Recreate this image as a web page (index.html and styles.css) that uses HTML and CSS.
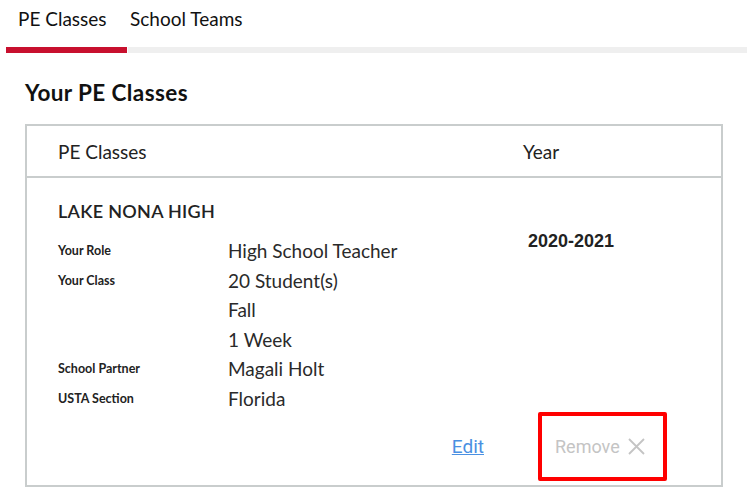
FILE: index.html
```html
<!DOCTYPE html>
<html lang="en">
<head>
<meta charset="utf-8">
<title>PE Classes</title>
<link rel="stylesheet" href="styles.css">
</head>
<body>
<nav class="tabs">
  <a class="tab tab-active">PE Classes</a>
  <a class="tab tab-rest">School Teams</a>
</nav>
<main class="content">
  <h1 class="title">Your PE Classes</h1>
  <section class="card">
    <div class="card-head">
      <div class="col-main">PE Classes</div>
      <div class="col-year">Year</div>
    </div>
    <div class="card-body">
      <div class="col-main">
        <h2 class="school">LAKE NONA HIGH</h2>
        <div class="details">
          <div class="label">Your Role</div><div class="value">High School Teacher</div>
          <div class="label">Your Class</div><div class="value">20 Student(s)</div>
          <div class="label"></div><div class="value">Fall</div>
          <div class="label"></div><div class="value">1 Week</div>
          <div class="label">School Partner</div><div class="value">Magali Holt</div>
          <div class="label">USTA Section</div><div class="value">Florida</div>
        </div>
      </div>
      <div class="col-year">
        <div class="year-value">2020-2021</div>
      </div>
    </div>
    <div class="actions">
      <a class="edit" href="#">Edit</a>
      <div class="remove-box">
        <span class="remove">Remove</span>
        <svg class="remove-x" width="17" height="17" viewBox="0 0 17 17"><path d="M1 1L16 16M16 1L1 16" stroke="#c4c4c4" stroke-width="1.8" fill="none"/></svg>
      </div>
    </div>
  </section>
</main>
</body>
</html>
```
FILE: styles.css
```css
body {
  margin: 0;
  font-family: Lato, "Noto Sans", sans-serif;
  color: #1d1d1d;
  background: #fff;
}
.tabs {
  display: flex;
  padding-left: 6px;
}
.tab {
  display: block;
  font-size: 19px;
  line-height: 24px;
  padding: 7px 0 16px;
  color: #111;
}
.tab-active {
  padding-left: 12px;
  width: 109px;
  border-bottom: 6px solid #c8102e;
}
.tab-rest {
  flex: 1;
  margin-left: 1px;
  padding-left: 2px;
  border-bottom: 6px solid #efefef;
}
.content {
  padding: 26px 0 0 25px;
}
.title {
  margin: 0 0 17px;
  font-size: 22.5px;
  letter-spacing: 0.4px;
  line-height: 28px;
  font-weight: 700;
  color: #111;
}
.card {
  width: 694px;
  border: 2px solid #c9cdcd;
}
.card-head {
  display: flex;
  height: 50px;
  align-items: center;
  border-bottom: 2px solid #c9cdcd;
  font-size: 19px;
  color: #222;
}
.col-main {
  width: 465px;
  padding-left: 31px;
}
.card-body {
  display: flex;
}
.school {
  margin: 22px 0 14px;
  font-size: 18px;
  letter-spacing: 0.3px;
  line-height: 22px;
  font-weight: 600;
  color: #222;
}
.details {
  display: grid;
  grid-template-columns: 170px 1fr;
  grid-auto-rows: 29.5px;
  align-items: center;
}
.label {
  font-size: 12.5px;
  font-weight: 700;
  color: #222;
}
.value {
  font-size: 19px;
  color: #2a2a2a;
}
.year-value {
  margin-top: 54px;
  padding-left: 5px;
  font-family: "Liberation Sans", Arial, sans-serif;
  font-size: 18px;
  font-weight: 700;
  line-height: 18px;
  color: #222;
}
.actions {
  display: flex;
  justify-content: flex-end;
  align-items: center;
  padding: 0 54px 4px 0;
  margin-top: -1px;
}
.edit {
  font-family: Roboto, "Liberation Sans", sans-serif;
  font-size: 19px;
  color: #4a90e2;
  text-decoration: underline;
  margin-right: 54px;
}
.remove-box {
  box-sizing: border-box;
  width: 129px;
  height: 69px;
  border: 4px solid #ff0000;
  border-radius: 2px;
  display: flex;
  align-items: center;
  padding-left: 13px;
}
.remove {
  font-family: Roboto, "Liberation Sans", sans-serif;
  font-size: 18px;
  color: #c4c4c4;
}
.remove-x {
  margin-left: 8px;
}
```
